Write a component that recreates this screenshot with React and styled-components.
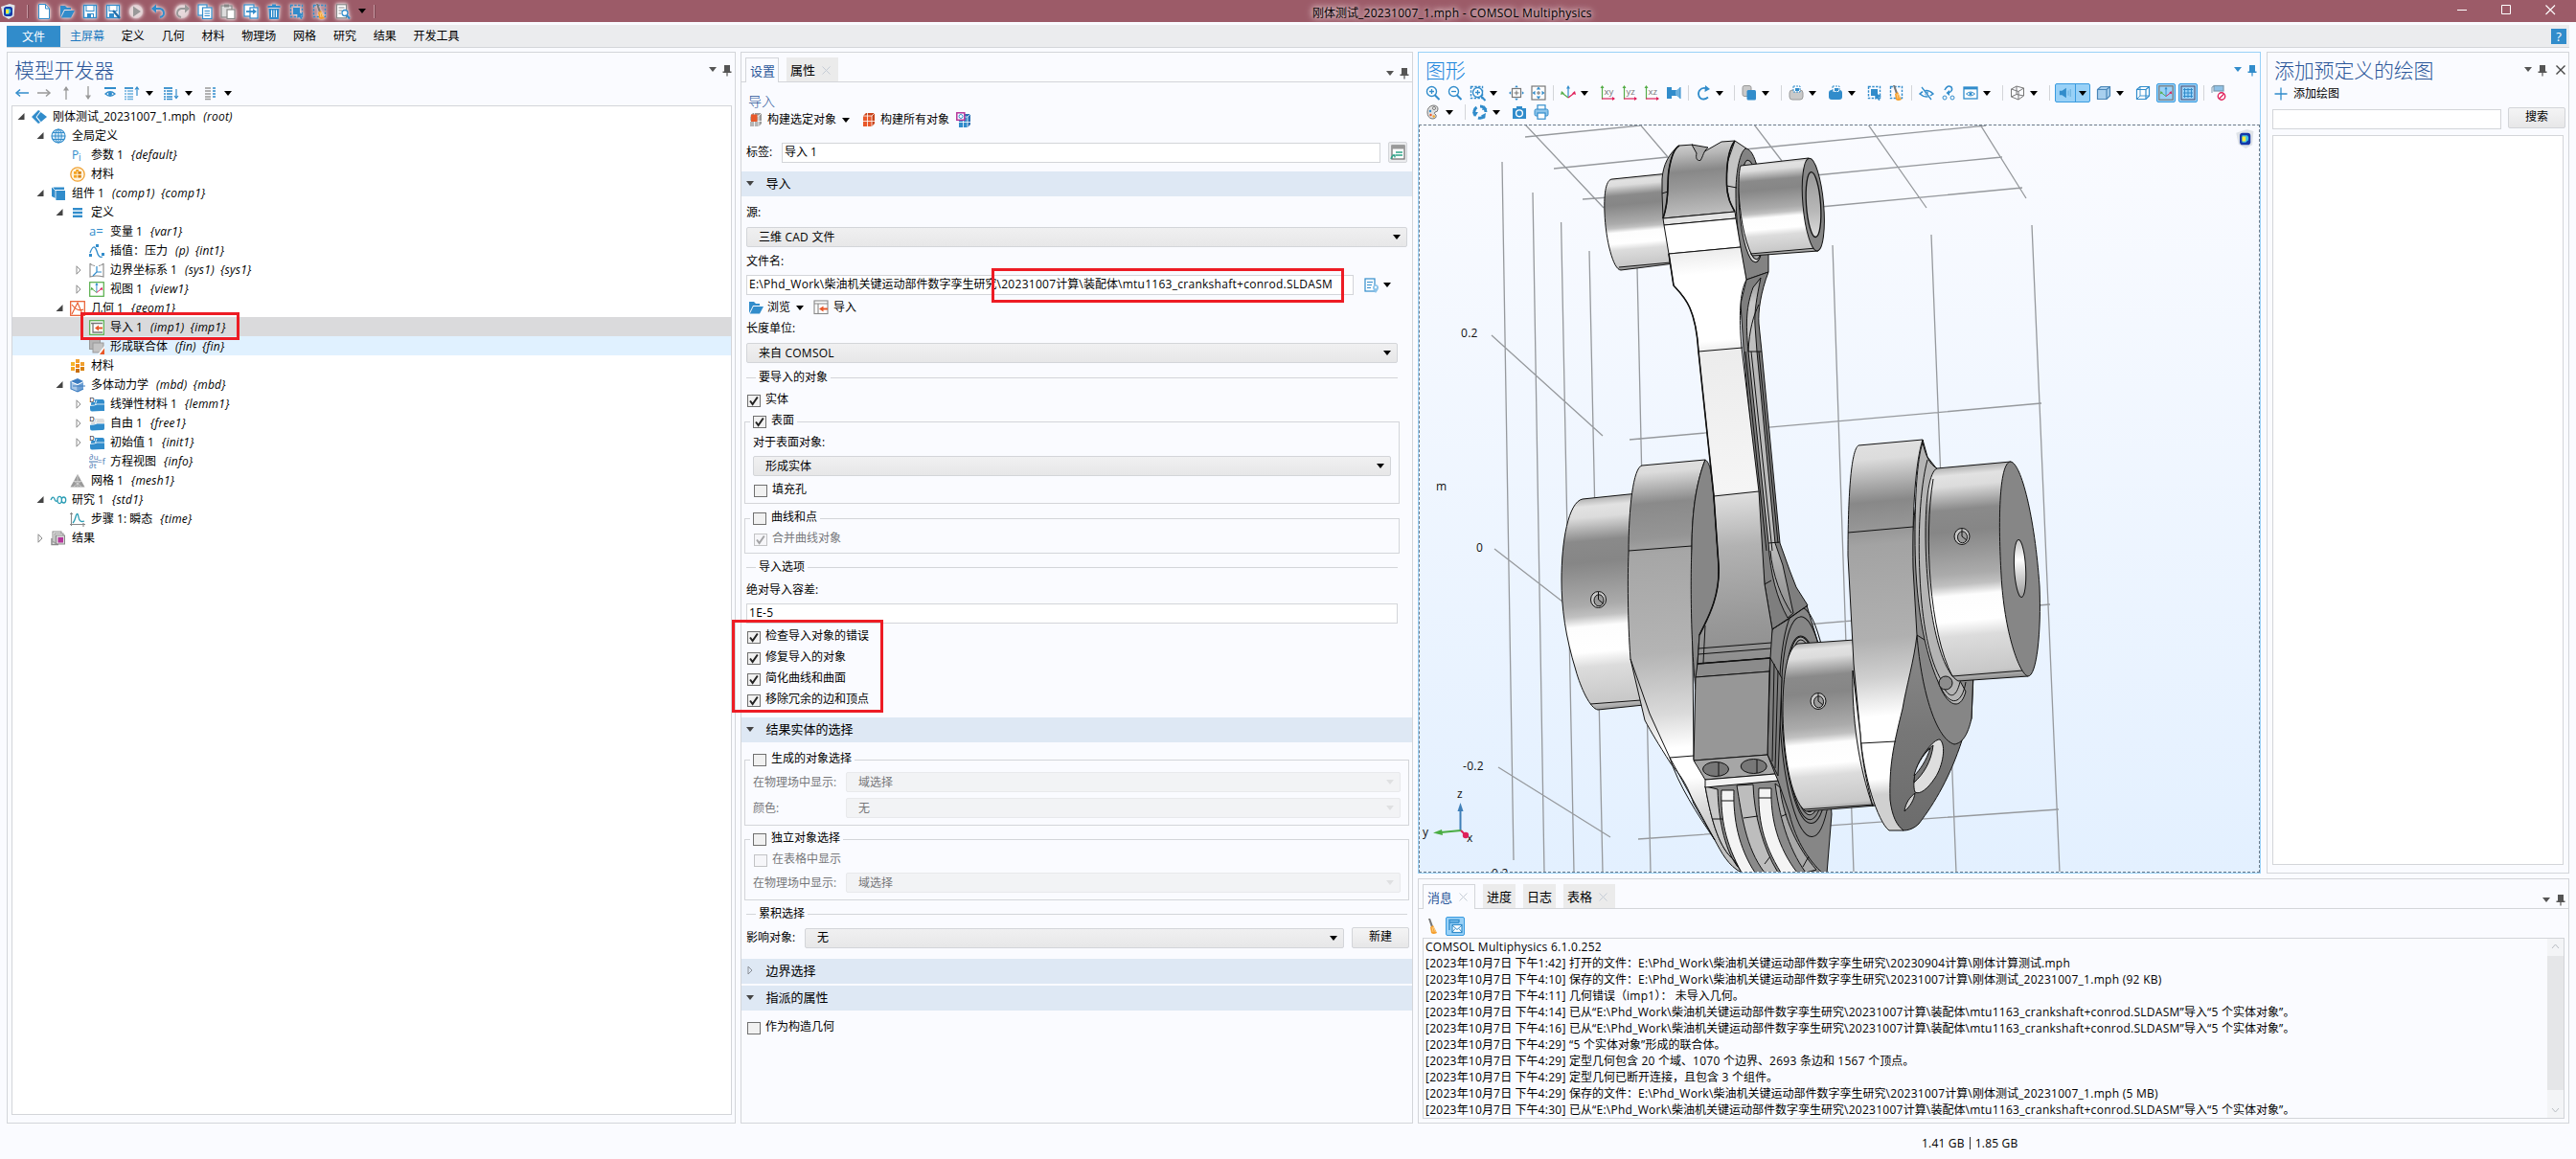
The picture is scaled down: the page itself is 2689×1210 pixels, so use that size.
import React from "react";
import styled, { createGlobalStyle, css } from "styled-components";

const B = "#318ccb";
const O = "#e8582a";
const LINE = "#d3d5d9";

const Global = createGlobalStyle`
  * { box-sizing: border-box; }
  body { margin: 0; background: #fafbff; color: #000; overflow: hidden; }
  body, button { font: 12px/16px "Open Sans", "Noto Sans CJK SC", sans-serif; }
`;

/* ---------- icons, drawn on a 16 x 16 field ---------- */
const s = (d, c = B, w = 1.3) => <path d={d} fill="none" stroke={c} strokeWidth={w} />;
const f = (d, c = B) => <path d={d} fill={c} />;
const r = (x, y, w, h, c = B) => <rect x={x} y={y} width={w} height={h} fill={c} />;
const box = (x, y, w, h, c = B, fill = "none", sw = 1.2) => (
  <rect x={x} y={y} width={w} height={h} fill={fill} stroke={c} strokeWidth={sw} />
);
const t = (x, y, size, c, str) => (
  <text x={x} y={y} fontSize={size} fill={c} fontFamily="Open Sans">{str}</text>
);
const brush = <>{f("M3 0 L5 0 L8 8 L6 9 Z", "#777")}{f("M5 9 L8 7 L12 15 Q8 17 6 15 Z", "#f59f2e")}{s("M7 9 L8 14 M8.4 9 L10.4 14", "#fde0a8", 0.7)}</>;
const brick = (a, b) => <>{f("M2 4 L5 1 H14 V12 L11 15 H2 Z", b)}{r(2, 4, 9, 11, a)}{s("M2 4 H11 V15 M6.5 1 V15 M2 9.5 H14 M11 4 L14 1", "#fff", 0.8)}</>;
const lens = <>{s("M9.8 10.2 L14.5 15", B, 2)}<circle cx="6.5" cy="6.5" r="5" fill="#fff" stroke={B} strokeWidth="1.4" /></>;
const cube = (c, fill = "none") => <><path d="M1.5 4.5 L5 1.5 H14.5 V11 L11 14.5 H1.5 Z" fill={fill} stroke={c} strokeWidth="1.2" />{s("M1.5 4.5 H11 V14.5 M11 4.5 L14.5 1.5", c, 1.2)}</>;
const dom = (a, b) => <>{f("M2 8 Q2 4 7 3 H14 Q16 3 16 6 V15 H2 Z", a)}{f("M1 9 Q6 9 8 8 H16 V13 Q16 15 13 15 L3 15.500 Q1 15.500 1 13 Z", b)}{s("M8 4 Q6 8 7 9 M1 9.500 Q6 9.500 8 8 H16", "#fff", 0.8)}{r(0, 0, 6, 6, "#fff")}{t(0.3, 5.8, 7.5, "#111", "D")}</>;
const dash = <rect x="1.5" y="1.5" width="12" height="12" fill="none" stroke={B} strokeWidth="1.4" strokeDasharray="2.4 1.4" />;
const axis2 = (label) => <>{s("M2.5 1 V14.5", "#54ad47", 1.2)}{s("M2 14 H15", "#e0205a", 1.2)}{f("M.5 3 L2.5 0 L4.5 3 Z", "#54ad47")}{f("M13 12 L16 14 L13 16 Z", "#e0205a")}{t(4.5, 9.5, 9.5, "#777", label)}</>;
const axes3 = <>{s("M8 2 V13", B, 1.2)}{s("M8 13 L1.5 8", "#54ad47", 1.2)}{s("M8 13 L14.5 8", "#e0205a", 1.2)}{f("M6 3.5 L8 0 L10 3.5 Z")}{f("M0 10 L1 6 L4 8.5 Z", "#54ad47")}{f("M16 10 L15 6 L12 8.5 Z", "#e0205a")}</>;
const comsol = <>{f("M1 3 L10 0 L15.5 1.5 L14.500 13 L9 16 L3 12.500 Z", "#dfe3e8")}<rect x="4" y="3" width="9" height="10" rx="2.5" fill="#1438a8" /><path d="M6 5 H10 Q12 6 11 9 L9 11 H6 Z" fill="#3fc3e0" /><path d="M6 6 H9 V10 H6 Z" fill="#f8ea3c" /></>;

const ICONS = {
  comsol,
  file: <>{f("M2.5.5 H9.5 L13.5 5 V15.5 H2.5 Z", "#fff")}{s("M2.5.5 H9.5 L13.5 5 V15.5 H2.5 Z M9.5.5 V5 H13.5", B, 1)}</>,
  open: <>{f("M1 2 H6 L8 4 H12 V6 H5 L1 14 Z")}{f("M5.5 7 H16 L12 14.5 H1.8 Z")}</>,
  save: <>{box(1.5, 1.5, 13, 13, B, "#fff", 1.4)}{box(4, 1.5, 8, 6, B, "#fff", 1)}{r(5, 10, 7, 5)}{r(9, 11, 2, 3, "#fff")}</>,
  saveas: <>{box(1.5, 1.5, 13, 13, B, "#fff", 1.4)}{box(4, 1.5, 8, 6, B, "#fff", 1)}{r(4, 10, 5, 5)}{s("M8 7 L15 15", "#1e6ca8", 2.4)}</>,
  play: <><circle cx="8" cy="8" r="7" fill="#e3d3d6" opacity=".8" />{f("M5 2.5 L13 8 L5 13.5 Z", "#999")}</>,
  undo: <>{s("M3 5 H9 Q13 6 13 10 Q13 13 9 14", B, 1.9)}{f("M0 5 L5 .5 V9.5 Z")}</>,
  redo: <><circle cx="8" cy="8" r="7" fill="#e3d3d6" opacity=".7" />{s("M13 5 H7 Q3 6 3 10 Q3 13 7 14", "#999", 1.9)}{f("M16 5 L11 .5 V9.5 Z", "#999")}</>,
  copy: <>{box(1, 1, 9, 11, B, "#fff")}{box(5.5, 4, 9.5, 11.5, B, "#fff")}{s("M7.5 7.5 H13 M7.5 10 H13 M7.5 12.5 H13", B, 1)}</>,
  paste: <>{box(1, 2, 11, 12, "#888", "#ddd")}{r(4, 0.5, 5, 3, "#888")}{box(7, 6, 8, 9.5, "#888", "#fff")}</>,
  dup: <>{box(1, 1, 10, 12, B, "#fff")}{box(7, 4, 8, 11, B, "#fff")}{s("M3 8 H12", B, 1.8)}{f("M10 5 L14 8 L10 11 Z")}</>,
  trash: <>{r(1.5, 2, 13, 2)}{r(6, 0.5, 4, 2)}{f("M2.5 5 H13.5 L12.8 16 H3.2 Z")}{s("M5.5 6.5 V14 M8 6.5 V14 M10.5 6.5 V14", "#fff", 1)}</>,
  sel: <>{dash}{r(4, 4, 7, 7)}{f("M8 7 L15 12 L12 12.5 L13.5 15.5 L12 16 L10.5 13 L8.5 15 Z")}</>,
  selbrush: <>{dash}<g transform="translate(1 0)">{brush}</g></>,
  find: <>{box(1.5, 0.8, 10, 14, "#888", "#fff")}{s("M3.5 4 H9.5 M3.5 7 H7 M3.5 10 H6", "#888", 1)}<circle cx="10" cy="9.5" r="3" fill="#fff" stroke={B} strokeWidth="1.3" />{s("M12 12 L15 15.5", B, 2)}</>,
  left: <>{s("M2 8 H15", B, 1.5)}{s("M6 4.5 L2 8 L6 11.5", B, 1.5)}</>,
  right: <>{s("M1 8 H14", "#999", 1.5)}{s("M10 4.5 L14 8 L10 11.5", "#999", 1.5)}</>,
  up: <>{s("M8 15 V2", "#999", 1.3)}{f("M5 5.5 L8 1 L11 5.5 Z", "#999")}</>,
  down: <>{s("M8 1 V14", "#999", 1.3)}{f("M5 10.5 L8 15 L11 10.5 Z", "#999")}</>,
  eye: <>{s("M2 3 H14", B, 2)}{s("M3 9 Q8 4.5 13 9 Q8 13.5 3 9 Z", B, 1.3)}<circle cx="8" cy="9" r="2" fill={B} /></>,
  listup: <>{s("M0 3 H9", B, 1.8)}{s("M0 6 H2 M3 6 H9 M0 9 H2 M3 9 H9 M0 12 H2 M3 12 H9 M0 14.5 H2 M3 14.5 H9", "#6cb0dd", 1.3)}{s("M13 11 V2 M11 4.5 L13 2 L15 4.5", B, 1.2)}</>,
  listdown: <>{s("M0 3 H9", B, 1.8)}{s("M0 6 H2 M3 6 H9 M0 9 H2 M3 9 H9 M0 12 H2 M3 12 H9 M0 14.5 H2 M3 14.5 H9", B, 1.5)}{s("M13 4 V14 M11 11 L13 13.5 L15 11", B, 1.2)}</>,
  cols: <>{s("M2 3 H8 M2 6 H8 M2 9 H8 M2 12 H8 M2 14.5 H8", "#999", 1.6)}{s("M10 3 H13 M10 6 H13 M10 9 H13 M10 12 H13", B, 1.6)}</>,
  root: <>{f("M0 8 L7 1 L9 2 L4.5 8 L9 14 L7 15 Z")}{f("M5.5 8 L9.5 3 L16 8 L9.5 13.5 Z")}{s("M5 8 L10 14", "#fff", 0.8)}</>,
  globe: <><circle cx="8" cy="8" r="7" fill="#dceefa" stroke={B} strokeWidth="1.2" /><ellipse cx="8" cy="8" rx="3.2" ry="7" fill="none" stroke={B} />{s("M1 8 H15 M2 4.5 H14 M2 11.5 H14 M8 1 V15", B, 1)}</>,
  pi: <>{t(2, 12, 12, B, "P")}{t(9, 14, 10, B, "i")}</>,
  matg: <><circle cx="8" cy="8" r="7.2" fill="#fff4df" stroke="#f0a030" strokeWidth="1.3" />{r(4, 5, 3.4, 2.8, "#f5a623")}{r(8.4, 5, 3.4, 2.8, "#d9820f")}{r(4, 8.8, 3.4, 2.8, "#f5a623")}{r(8.4, 8.8, 3.4, 2.8, "#d9820f")}{r(6.2, 3, 3, 2, "#f5a623")}</>,
  comp: <>{f("M1 2 L4 1.5 H14 V4 H5 V13 L1 11 Z")}{r(5, 5, 10, 10)}{s("M5 15 V5 L2 2", "#fff", 0.8)}</>,
  defs: <>{r(3, 3, 10, 2.4)}{r(3, 6.8, 10, 2.4)}{r(3, 10.6, 10, 2.4)}</>,
  vars: t(0, 12, 13, B, "a="),
  interp: <>{s("M1 10 Q5 -1 8 8 Q10 16 14 14", B, 1.3)}{r(7, 1, 3, 3)}{r(0, 11, 3, 3)}{r(13, 10, 3, 3)}</>,
  sys: <>{s("M1 1 V15 Q8 13 15 15 V1 M1 1 Q3 3.5 6 3.5 M15 1 Q13 3.5 10 3.5", "#888", 1.1)}{s("M8 4 V10 L4 14 M8 10 L13 10", B, 1.2)}</>,
  view: <>{box(0.7, 0.7, 14.6, 14.6, "#54ad47", "#fff", 1.2)}<g transform="translate(1.5 1) scale(.8)">{axes3}</g></>,
  geom: <>{box(0.7, 0.7, 14.6, 14.6, O, "#fff", 1.2)}{s("M2 14 Q5 8 8 2 L13 14 M2 4 Q8 12 14 9", O, 1.1)}</>,
  imp: <>{box(0.7, 0.7, 14.6, 14.6, "#54ad47", "#fff", 1.2)}{s("M2 3.5 H14 M4 3.5 V13 H14", "#777", 1.3)}{s("M8 8.5 H14", O, 2)}{f("M6 8.5 L10 5.5 V11.5 Z", O)}</>,
  impn: <>{box(1, 1, 14, 13.5, "#888", "#fff", 1.1)}{s("M1 4 H15 M5 4 V14", "#888", 1.1)}{s("M9 9.5 H15", O, 2)}{f("M6 9.5 L10.5 6.5 V12.5 Z", O)}</>,
  fin: <>{box(0.5, 0.5, 11, 10, "#999", "#b5b5b5", 1)}{box(4, 4, 11, 10, "#999", "#c4c4c4", 1)}{f("M9 16 L16 7 V16 Z", "#fff")}{f("M11 16 L16 9.5 V16 Z", O)}</>,
  mat: <>{r(1, 4, 4, 4, "#f5b52c")}{r(6, 1, 4, 4, "#f0a030")}{r(11, 4, 4, 4, "#f0a030")}{r(6, 6, 4, 4, "#f08a1c")}{r(1, 9, 4, 4, "#f5a623")}{r(11, 9, 4, 4, "#d9820f")}{r(6, 11, 4, 4, "#c76d0a")}</>,
  mbd: <>{f("M1 4 L8 1 L14 4 L8 7 Z", "#3d7dc0")}{f("M1 5 L7.5 8 V15 L1 12 Z", "#a9c8e8")}{f("M8.5 8 L14 5 V12 L8.5 15 Z", "#6ea0d4")}{s("M1 4 V12 L8 15 L14 12 M8 8 V15 M3 9 H16", "#3d7dc0", 1.1)}</>,
  domd: dom(B, B),
  free: dom("#dcdcdc", B),
  eq: <>{t(0, 6, 8, "#3f72b0", "∂u")}{t(0, 15, 8, "#3f72b0", "∂t")}{s("M0 8 H9", "#3f72b0", 1)}{t(8.5, 10.5, 9, "#3f72b0", "=f")}</>,
  mesh: <>{f("M8 1 L15.5 14.5 H.5 Z", "#9a9a9a")}{s("M4 8 L12 14 M12 8 L4 14 M4.5 8.5 H11.5 M8 2 V14", "#d6d6d6", 0.8)}</>,
  study: <>{s("M0 8 Q2 3 4 7 Q5 11 7 8 M7 8 A2.200 3 0 1 0 11.300 8 A2.200 3 0 1 0 7 8 M11.300 8 A2.200 3 0 1 0 15.700 8 A2.200 3 0 1 0 11.300 8", "#2b9db5", 1.3)}</>,
  step: <>{s("M1.5 1 V15 M0 13.5 H16 M0 2.5 H3 M14 12 V16", "#888", 1.1)}{s("M3 12 Q5 10 6.5 4 Q8 0 9 6 Q10 12 15 10", "#2b9db5", 1.3)}</>,
  results: <>{box(2, 1, 9, 11, "#888", "#fff", 1)}{box(4, 3, 9, 10, "#888", "#fff", 1)}{box(5.5, 5, 9, 9, "#888", "#ddd", 1)}{r(7.5, 7, 5.5, 5.5, "#b5369b")}{s("M1 8 V14.5 H8", "#888", 1.4)}</>,
  buildsel: <>{brick("#b5b5b5", "#9a9a9a")}{r(3, 2.5, 6.5, 7.5, O)}</>,
  buildall: brick(O, "#c9441b"),
  buildadd: <><g transform="translate(1 1)">{brick(B, "#2a6fb4")}</g>{box(0.8, 0.8, 8, 7.5, "#b5369b", "#fff", 1.5)}<circle cx="5" cy="4.5" r="2" fill="none" stroke={B} /></>,
  label: <>{box(2, 1, 13, 14, "#777", "#fff", 1.3)}{r(2, 1, 13, 3.5, "#999")}{s("M6 8 H13 M6 11 H13", "#2ca387", 1.4)}{s("M1 15 Q2 11 5 11 M2.5 11 H5 V13.5", "#2ca387", 1.4)}</>,
  docpin: <>{box(1, 1, 10, 13, B, "#fff")}{s("M3 4.5 H9 M3 7.5 H8 M3 10.5 H7", B, 1.1)}{f("M12 16 Q8.5 11.5 9 9.5 Q9.7 7 12 7 Q14.6 7 15 9.5 Q15.5 11.5 12 16 Z", "#8cc4ea")}<circle cx="12" cy="10" r="1.2" fill="#fff" /></>,
  zin: <>{lens}{s("M4 6.5 H9 M6.5 4 V9", B, 1.3)}</>,
  zout: <>{lens}{s("M4 6.5 H9", B, 1.3)}</>,
  zbox: <>{dash}<g transform="translate(2 1)">{lens}{s("M4 6.5 H9 M6.5 4 V9", B, 1.3)}</g></>,
  ext: <>{box(3.5, 3.5, 9, 9, "#777", "#fff")}{s("M8 5.5 V10.5 M5.5 8 H10.5", "#777", 1.1)}{f("M8 0 L9.8 2.2 H6.2 Z M8 16 L9.8 13.8 H6.2 Z M0 8 L2.2 6.2 V9.8 Z M16 8 L13.8 6.2 V9.8 Z")}</>,
  ext2: <>{box(1, 1, 14, 14, "#777", "#fff")}{s("M8 6 V10 M6 8 H10", "#777", 1.1)}{f("M8 1.5 L10.3 4.5 H5.7 Z M8 14.5 L10.3 11.5 H5.7 Z M1.5 8 L4.5 5.7 V10.3 Z M14.5 8 L11.5 5.7 V10.3 Z")}</>,
  axes3,
  xy: axis2("xy"), yz: axis2("yz"), xz: axis2("xz"),
  proj: <>{r(1, 2, 5, 12)}{r(6, 5, 5, 6)}{f("M10 6 L15 2 V14 L10 10 Z", "#6cb0dd")}{s("M15 2 V14", B, 1)}</>,
  rot: <>{s("M12 3.5 Q7 1.5 4 5.5 Q1.5 10 5 13.5 Q9 16 13 12.5", B, 1.8)}{f("M10 0 L15 4 L9.5 7 Z")}</>,
  cubes: <><rect x="1" y=".5" width="9" height="11" rx="2" fill="#c9c9c9" stroke="#999" /><rect x="5.500" y="5" width="9.500" height="10.500" rx="1.500" fill={B} /></>,
  selg: <><rect x="1" y="5" width="14" height="10" rx="3" fill="#c9c9c9" stroke="#999" /><rect x="5" y="1" width="7" height="6" fill="#fff" stroke={B} strokeDasharray="2 1" />{r(7, 3, 4, 3)}</>,
  selb: <><rect x="1" y="5" width="14" height="10" rx="3" fill={B} /><rect x="5" y="1" width="7" height="6" fill="#fff" stroke={B} strokeDasharray="2 1" />{r(7, 3, 4, 3)}</>,
  hide: <>{s("M1 9 Q8 2 15 9 Q8 15 1 9 Z", B, 1.5)}<circle cx="8" cy="8.5" r="2" fill={B} />{s("M2 3 L14 14.5", "#fff", 2.4)}{s("M3 2 L13 15", B, 1.3)}</>,
  swap: <>{s("M4 5 Q7 -1 11 2 Q13 6 8 8", B, 1.6)}{f("M9 5 L9 11 L5.5 8 Z")}<circle cx="4" cy="13" r="2" fill="none" stroke={B} /><circle cx="12" cy="13" r="2" fill="none" stroke={B} /></>,
  viewbox: <>{box(1, 2, 14, 12, B, "#fff", 1.3)}{r(1, 2, 14, 2.4)}{s("M3.5 9 Q8 5 12.5 9 Q8 13 3.5 9 Z", B, 1)}<circle cx="8" cy="9" r="1.6" fill={B} /></>,
  wire: <>{s("M1.5 4 L7 1 L14.5 3 V11 L9 15 L1.5 12 Z M1.5 4 L9 6.5 L14.5 3 M9 6.5 V15 M7 1 V9.5 L1.5 12 M7 9.5 L14.5 11", "#777", 1)}</>,
  light: <>{f("M1 5.5 H4 L9 2 V14 L4 10.5 H1 Z")}{s("M11.5 5 V11 M14 3.5 V12.5", "#6cb0dd", 1.2)}</>,
  trans: cube("#4a86b8", "#a8cfee"),
  wbox: <>{cube(B, "#fff")}{s("M1.5 14.5 L5 11 H14.5 M5 11 V1.5", B, 0.9)}</>,
  axbox: <>{box(0.8, 0.8, 14.4, 14.4, "#777", "none", 1.2)}<g transform="translate(1.8 1.4) scale(.78)">{axes3}</g></>,
  grid: <>{box(1, 1, 14, 14, "#557", "none", 1.1)}{s("M3 4.5 H13 M3 8 H13 M3 11.5 H13 M4.5 3 V13 M8 3 V13 M11.5 3 V13", B, 1)}</>,
  nosel: <>{box(3, 0.5, 10, 5.5, "#7c99ad", "#8fc1e6")}{s("M1 8 V2 L4 .5", "#7c99ad", 1)}<circle cx="11" cy="11.5" r="3.7" fill="#fff" stroke="#e0205a" strokeWidth="1.4" />{s("M8.5 14 L13.5 9", "#e0205a", 1.3)}</>,
  palette: <><path d="M8 1 Q13 1 13 5 Q13 8 10 8 Q8 9 11 11 Q12 15 7 15 Q2 14 2 8 Q2 2 8 1 Z" fill="#e0e0e0" stroke="#777" /><circle cx="9" cy="4" r="1.5" fill="#fff" stroke="#777" /><circle cx="5" cy="7" r="1.2" fill={B} /><circle cx="5.5" cy="11" r="1.2" fill={O} /><circle cx="8.7" cy="12.5" r="1.2" fill="#f5a623" /></>,
  aperture: <>{s("M8 2 A6 6 0 0 1 14 8 M12.5 12 A6 6 0 0 1 6 14 M3 11.5 A6 6 0 0 1 4.5 3", B, 3)}{f("M12 1 L15.5 5 L10 6 Z M14 9 L13 15 L9 11.5 Z M0 8 L6 8 L3 13 Z")}</>,
  camera: <>{r(1, 4, 14, 11)}{r(5, 2, 6, 3)}<circle cx="8" cy="9.3" r="3.4" fill={B} stroke="#fff" strokeWidth="1.4" /></>,
  print: <>{box(4, 0.8, 8, 5, B, "#fff")}<rect x="1" y="5" width="14" height="7" rx="1.5" fill="#8cc4ea" stroke={B} />{box(4, 9, 8, 6.2, B, "#fff")}</>,
  brush,
  mail: <>{s("M2 12 V1.5 H12 V4 M2 4 H12", B, 1.3)}{box(5, 6.5, 10, 8, B, "#fff")}{s("M5 7 L10 11.5 L15 7 M5 14 L8 10.5 M15 14 L12 10.5", B, 1)}</>,
  plus: s("M8 1.5 V14.5 M1.5 8 H14.5", B, 1.3),
  cross: s("M3.5 3.5 L12.5 12.5 M12.5 3.5 L3.5 12.5", "#444", 1.4),
  pin: <>{f("M5 3 H11 V9.5 H12.5 V11 H3.5 V9.5 H5 Z", "currentColor")}{f("M7.4 11 H8.6 V14.5 H7.4 Z", "currentColor")}</>,
};
const Svg = styled.svg`display: block; flex: none; overflow: visible;`;
const Icon = ({ name, size = 16 }) => (
  <Svg width={size} height={size} viewBox="0 0 16 16">{ICONS[name]}</Svg>
);

/* ---------- shared controls ---------- */
const Latin = styled.span`letter-spacing: .27px;`;
const Mixed = ({ children }) =>
  [].concat(children).join("").split(/([\x20-\x7e“”]+)/).map((part, i) => (i % 2 ? <Latin key={i}>{part}</Latin> : part));

const Caret = styled.i`
  flex: none;
  width: 0; height: 0;
  border: 4px solid transparent;
  border-top: 5px solid ${(p) => p.$c || "#000"};
  border-bottom: 0;
  opacity: ${(p) => (p.$faint ? 0.08 : 1)};
`;
const Shell = styled.div`
  display: flex;
  flex-direction: column;
  width: 2689px;
  height: 1210px;
  position: relative;
`;
const TitleBar = styled.header`
  display: flex;
  align-items: center;
  height: 23px;
  background: #9c5b68;
  position: relative;
`;
const QuickIcons = styled.div`
  display: flex;
  align-items: center;
  gap: 8px;
  margin-left: 12px;
  & > svg { filter: drop-shadow(0 0 1.5px rgba(255,255,255,.9)) drop-shadow(0 0 2.5px rgba(255,255,255,.6)); }
`;
const Grip = styled.i`
  width: 2px; height: 14px;
  border-left: 1px solid #c99aa4;
  border-right: 1px solid #7d4853;
`;
const Caption = styled.div`
  position: absolute;
  left: 1370px; top: 5px;
  line-height: 17px;
  white-space: nowrap;
  text-shadow: 0 0 5px #e3c9ce, 0 0 7px #e3c9ce, 0 0 10px #e3c9ce;
`;
const WinButtons = styled.div`
  display: flex;
  gap: 35px;
  margin-left: auto;
  padding: 0 21px 3px 0;
`;
const Ribbon = styled.nav`
  display: flex;
  align-items: center;
  height: 24px;
  margin: 3px 7px 4px;
  background: #ebecee;
  border-bottom: 1px solid ${LINE};
`;
const FileTab = styled.div`
  display: grid;
  place-items: center;
  width: 56px; height: 22px;
  padding-top: 3px;
  background: ${B};
  color: #fff;
`;
const RibbonTab = styled.span`
  margin-left: ${(p) => p.$ml || 17.8}px;
  color: ${(p) => (p.$on ? "#2079c0" : "#000")};
`;
const Help = styled.div`
  display: grid;
  place-items: center;
  width: 16px; height: 16px;
  margin: 0 3px 0 auto;
  background: ${B};
  color: #fff;
  font-size: 13px;
`;
const Main = styled.main`
  display: grid;
  grid-template-columns: 761px 702px 1202px;
  gap: 5px;
  height: 1119px;
  margin-left: 7px;
`;
const Panel = styled.section`
  display: flex;
  flex-direction: column;
  min-width: 0; min-height: 0;
  border: 1px solid ${(p) => p.$edge || LINE};
`;
const RightSide = styled.div`
  display: grid;
  grid-template-columns: 880px 316px;
  grid-template-rows: 858px 256px;
  gap: 5px 6px;
  & > :last-child { grid-column: 1 / 3; }
`;
const PanelHead = styled.div`
  display: flex;
  align-items: center;
  flex: none;
  height: 32px;
  padding: 1px 0 0 7px;
  color: ${(p) => p.$c || "#2a5699"};
  font: 300 21px/26px "Noto Sans CJK SC", sans-serif;
  letter-spacing: -.2px;
`;
const Dock = styled.div`
  display: flex;
  align-items: center;
  gap: 3px;
  margin: 2px 0 0 auto;
  color: ${(p) => p.$c || "#555"};
`;
const Docks = ({ c = "#555", close }) => (
  <Dock $c={c}><Caret $c={c} /><Icon name="pin" />{close && <Icon name="cross" />}</Dock>
);
const TreeTools = styled.div`
  display: flex;
  align-items: center;
  height: 20px;
  padding-left: 7px;
  gap: 7px;
  & > i { margin: 0 4px 0 -1px; }
`;

/* ---------- model tree ---------- */
const Tree = styled.div`
  flex: 1;
  margin: 3px 3px 8px 4px;
  border: 1px solid ${LINE};
  background: #fff;
`;
const TreeRow = styled.div`
  display: flex;
  align-items: center;
  height: 20px;
  padding: 1px 0 0 ${(p) => 2 + p.$level * 20}px;
  background: ${(p) => (p.$state === "selected" ? "#dadadc" : p.$state === "hover" ? "#e0f1ff" : "none")};
  white-space: pre;
  em { font-style: italic; margin-left: 8px; letter-spacing: .25px; word-spacing: 3px; }
`;
const Twist = styled.span`
  display: grid;
  place-items: center;
  width: 14px;
  margin-right: 4px;
`;
const TreeLabel = styled.span`margin-left: 6px;`;
const TREE = [
  [0, "v", "root", "刚体测试_20231007_1.mph", "(root)"],
  [1, "v", "globe", "全局定义"],
  [2, "", "pi", "参数 1", "{default}"],
  [2, "", "matg", "材料"],
  [1, "v", "comp", "组件 1", "(comp1) {comp1}"],
  [2, "v", "defs", "定义"],
  [3, "", "vars", "变量 1", "{var1}"],
  [3, "", "interp", "插值：压力", "(p) {int1}"],
  [3, ">", "sys", "边界坐标系 1", "(sys1) {sys1}"],
  [3, ">", "view", "视图 1", "{view1}"],
  [2, "v", "geom", "几何 1", "{geom1}"],
  [3, "", "imp", "导入 1", "(imp1) {imp1}", "selected"],
  [3, "", "fin", "形成联合体", "(fin) {fin}", "hover"],
  [2, "", "mat", "材料"],
  [2, "v", "mbd", "多体动力学", "(mbd) {mbd}"],
  [3, ">", "domd", "线弹性材料 1", "{lemm1}"],
  [3, ">", "free", "自由 1", "{free1}"],
  [3, ">", "domd", "初始值 1", "{init1}"],
  [3, "", "eq", "方程视图", "{info}"],
  [2, "", "mesh", "网格 1", "{mesh1}"],
  [1, "v", "study", "研究 1", "{std1}"],
  [2, "", "step", "步骤 1: 瞬态", "{time}"],
  [1, ">", "results", "结果"],
];

/* ---------- settings form ---------- */
const TabStrip = styled.div`
  display: flex;
  align-items: flex-end;
  height: 31px;
  flex: none;
  padding-left: 4px;
  border-bottom: 1px solid ${LINE};
`;
const Tab = styled.div`
  display: flex;
  align-items: center;
  gap: 7px;
  height: 25px;
  padding: 0 ${(p) => (p.$x ? 7 : 3)}px 0 3px;
  margin-right: 8px;
  font-size: 13px;
  background: #ebebeb;
  border: 1px solid #ebebeb;
  border-bottom: 0;
  ${(p) => p.$on && css`
    height: 26px;
    margin-bottom: -1px;
    padding-left: 4px;
    background: #fafbff;
    border-color: ${LINE};
    color: #2a5699;
  `}
  & > svg { color: #c5ccd6; }
`;
const TabX = () => <Svg width="9" height="9" viewBox="0 0 9 9">{s("M.5 .5 L8.5 8.5 M8.5 .5 L.5 8.5", "currentColor", 1)}</Svg>;
const StripDock = styled.div`margin: 0 0 1px auto;`;
const Row = styled.div`
  display: flex;
  align-items: center;
  flex: none;
  gap: ${(p) => p.$gap || 0}px;
  height: ${(p) => p.$h || 16}px;
  margin: ${(p) => p.$mt || 0}px ${(p) => (p.$mr ?? 5)}px 0 ${(p) => (p.$ml ?? 5)}px;
  color: ${(p) => (p.$off ? "#76777a" : "#000")};
  white-space: nowrap;
`;
const Heading = styled.div`
  margin: 9px 0 0 7px;
  font: 300 14px/20px "Noto Sans CJK SC", sans-serif;
  color: #2a5699;
`;
const SectionBar = styled.div`
  display: flex;
  align-items: center;
  flex: none;
  height: 26px;
  margin-top: ${(p) => p.$mt}px;
  padding: 0 0 2px 5px;
  background: #dee8f4;
  font-size: 13px;
`;
const SectionMark = styled.span`width: 20.5px; display: flex;`;
const Section = ({ mt, shut, children }) => (
  <SectionBar $mt={mt}>
    <SectionMark>{shut ? <Svg width="8" height="10" viewBox="0 0 8 10">{s("M2 1 L6 5 L2 9 Z", "#8a8f96", 1)}</Svg> : <Caret $c="#444" />}</SectionMark>
    {children}
  </SectionBar>
);
const Field = styled.div`
  flex: 1;
  height: 21px;
  padding: 1px 2px;
  border: 1px solid ${LINE};
  background: #fff;
  white-space: nowrap;
`;
const Combo = styled.div`
  display: flex;
  align-items: center;
  justify-content: space-between;
  flex: 1;
  height: 21px;
  padding: 0 6px 0 12px;
  border: 1px solid ${LINE};
  border-radius: 2px;
  background: linear-gradient(#f0f0f1, #e7e7e8);
  ${(p) => p.$off && css`background: #f2f3f5; border-color: #e8e9ec;`}
`;
const Select = ({ off, children }) => <Combo $off={off}><span><Mixed>{children}</Mixed></span><Caret $faint={off} /></Combo>;
const Button = styled.button`
  width: 60px; height: 22px;
  padding: 0 0 2px;
  border: 1px solid ${LINE};
  border-radius: 2px;
  background: linear-gradient(#f4f4f5, #e7e7e8);
  color: #000;
`;
const IconButton = styled.div`
  display: grid;
  place-items: center;
  width: 20px; height: 22px;
  border: 1px solid ${LINE};
  border-radius: 2px;
  background: #ebecee;
`;
const TickBox = styled.span`
  display: grid;
  place-items: center;
  width: 14px; height: 13px;
  background: #f1f1f1;
  border: 1px solid #707070;
  opacity: ${(p) => (p.$off ? 0.4 : 1)};
`;
const Check = ({ on, off, children, ...row }) => (
  <Row $h={14} $gap={5} $off={off} {...row}>
    <TickBox $off={off}>{on && <Svg width="12" height="11" viewBox="0 0 12 11">{s("M2 5.5 L4.6 9 L9.8 1.5", "#222", 2)}</Svg>}</TickBox>
    <TickText>{children}</TickText>
  </Row>
);
const TickText = styled.span`padding-bottom: 2px;`;
const LineTitle = styled(Row)`
  gap: 3px;
  &::before { content: ""; width: 10px; height: 1px; background: ${LINE}; }
  &::after { content: ""; flex: 1; height: 1px; background: ${LINE}; }
`;
const Group = styled.div`
  flex: none;
  margin: ${(p) => p.$mt}px ${(p) => p.$mr}px 0 3px;
  padding: 0 0 ${(p) => p.$pb}px 3px;
  border: 1px solid ${LINE};
`;
const Legend = styled.div`
  width: max-content;
  margin: -8px 0 0 2px;
  padding-right: 3px;
  background: #fafbff;
`;
const Fixed = styled.span`width: ${(p) => p.$w}px;`;
const BtnIcon = styled.span`display: flex; margin-right: ${(p) => p.$mr || 0}px; margin-left: ${(p) => p.$ml || 0}px;`;

/* ---------- graphics ---------- */
const Tools = styled.div`
  display: flex;
  align-items: center;
  gap: 5px;
  flex: none;
  height: 20px;
  padding-left: 6px;
  & > i { margin: 0 6px 0 -1px; }
`;
const Sep = styled.span`width: 1px; height: 16px; background: ${LINE}; margin: 0 0.9px;`;
const Slot = styled.span`display: grid; place-items: center; width: 18px;`;
const Pressed = styled.span`
  display: flex;
  align-items: center;
  justify-content: space-evenly;
  width: ${(p) => p.$w || 20}px;
  height: 20px;
  margin-right: ${(p) => p.$mr || 0}px;
  background: #99d1f7;
  border: 1px solid #3a9be0;
  border-radius: 2px;
`;
const PressedRule = styled.span`width: 1px; height: 18px; background: #3a9be0;`;
const Canvas = styled.div`
  flex: 1;
  min-height: 0;
  margin-top: ${(p) => p.$mt || 0}px;
  border: 1px dashed #6d7a88;
  background: linear-gradient(#fafbff, #e3f0ff);
  & > svg { display: block; }
`;
const T1 = ["zin", "zout", "zbox", "v", "ext", "ext2", "|", "axes3", "v", "xy", "yz", "xz", "proj", "|", "rot", "v", "|", "cubes", "v", "|", "selg", "v", "selb", "v", "sel", "selbrush", "|", "hide", "swap", "viewbox", "v", "|", "wire", "v", "|"];
const T2 = ["trans", "v", "wbox"];
const T3 = ["palette", "v", "|", "aperture", "v", "camera", "print"];
const tool = (n, i) => (n === "v" ? <Caret key={i} /> : n === "|" ? <Sep key={i} /> : <Slot key={i}><Icon name={n} /></Slot>);

/* shading runs across each part, square to the 5 degree tilt of its axis */
const TILT = 0.088;
const grad = (id, x, y1, y2, stops, tilt = TILT) => (
  <linearGradient id={id} gradientUnits="userSpaceOnUse" x1={x} x2={x + (y2 - y1) * tilt} y1={y1} y2={y2}>
    {stops.map(([o, c]) => <stop key={o} offset={o} stopColor={c} />)}
  </linearGradient>
);
const CYL = [[0, "#b0b0b0"], [0.04, "#e2e2e2"], [0.09, "#dcdcdc"], [0.2, "#8a8a8a"], [0.3, "#868686"], [0.5, "#ababab"], [0.55, "#c0c0c0"], [0.6, "#fdfdfd"], [0.72, "#fff"], [0.79, "#dcdcdc"], [0.96, "#c8c8c8"], [1, "#8d8d8d"]];
const GRIDLINES = "M1592 130L1674 217M1712 130L1741 164M1831 130L1860 168M1950 130L2011 217M2067 130L2115 207M1592 143L1712 131M1622 176L1741 164M1652 208L1680 206M1821 156L2073 131M1895 183L2090 164M1900 216L2111 196M1568 169L1580 898M1600 201L1612 911M1629.600 232L1643 911M1659 262L1673 911M1709 280L1723 911M1913 256L1935 911M2016 245L2042 911M2121 235L2150 911M1701 459L2131 421M1740 664L2140 631M1710 876L2149 845M1557 350L1673 455M1560 573L1640 635M1564 801L1681 874";
const Face = ({ d, fill }) => <path d={d} fill={fill} stroke="#111" strokeWidth="1" strokeLinejoin="round" />;
const Edge = ({ d, w = 1 }) => <path d={d} fill="none" stroke="#111" strokeWidth={w} />;
const Bore = ({ x, y }) => (
  <g stroke="#111" fill="#9a9a9a"><ellipse cx={x} cy={y} rx="8" ry="8.500" fill="#c8c8c8" /><ellipse cx={x + 0.5} cy={y + 0.8} rx="5" ry="6" /><path d={`M${x} ${y - 8}V${y}L${x + 5} ${y + 4}`} fill="none" /></g>
);
const Crankshaft = () => (
  <svg width="876" height="779" viewBox="1482 131 876 779">
    <defs>
      {grad("pinL", 1712, 183, 279, CYL)}
      {grad("pinR", 1857, 167, 265, CYL)}
      {grad("mainL", 1690, 517, 739, CYL)}
      {grad("mainR", 2065, 485, 708, CYL)}
      {grad("crankpin", 1910, 669, 845, CYL)}
      {grad("webL", 1735, 480, 880, [[0, "#dedede"], [0.03, "#dcdcdc"], [0.11, "#8a8a8a"], [0.2, "#959595"], [0.24, "#a6a6a6"], [0.5, "#b4b4b4"], [0.66, "#dadada"], [0.75, "#fff"], [0.83, "#fff"], [0.9, "#dedede"], [1, "#c0c0c0"]])}
      {grad("webR", 1965, 462, 867, [[0, "#e0e0e0"], [0.04, "#dcdcdc"], [0.15, "#888"], [0.23, "#999"], [0.26, "#a3a3a3"], [0.5, "#b0b0b0"], [0.6, "#cfcfcf"], [0.7, "#fff"], [0.86, "#fff"], [0.9, "#d0d0d0"], [1, "#d0d0d0"]])}
      {grad("head", 1775, 148, 226, [[0, "#d0d0d0"], [0.15, "#b8b8b8"], [0.38, "#888"], [0.6, "#989898"], [1, "#c2c2c2"]])}
      {grad("shank", 1800, 262, 700, [[0, "#eee"], [0.05, "#fff"], [0.21, "#fff"], [0.235, "#ececec"], [0.57, "#f5f5f5"], [0.58, "#dedede"], [0.7, "#b2b2b2"], [0.88, "#989898"], [1, "#8c8c8c"]])}
      {grad("side", 1840, 280, 640, [[0, "#7c7c7c"], [0.1, "#c8c8c8"], [0.3, "#b8b8b8"], [0.8, "#bdbdbd"], [1, "#8a8a8a"]], 0)}
      {grad("bore", 1893, 180, 248, [[0, "#999"], [0.6, "#b8b8b8"], [1, "#ddd"]], 0)}
      {grad("endhole", 2108, 563, 624, [[0, "#c0c0c0"], [0.35, "#fff"], [0.55, "#ddd"], [1, "#999"]], 0)}
      {grad("webside", 2020, 663, 866, [[0, "#8a8a8a"], [0.5, "#777"], [1, "#6c6c6c"]], 0)}
    </defs>
    <path d={GRIDLINES} stroke="#96999d" strokeWidth="1.300" fill="none" />

    {/* left main journal and web */}
    <Face fill="url(#mainL)" d="M1652 521L1710 515L1716 736L1668 741C1660 740 1650 718 1645 700C1634 664 1630 635 1630 605C1630 566 1637 524 1652 521Z" />
    <Edge d="M1660 735L1713 731" />
    <Bore x={1668.5} y={626} />
    <Face fill="url(#webL)" d="M1714 486L1780 480C1772 500 1766 530 1766 573L1768 793L1800 815L1818 911C1804 904 1797 890 1790 877L1768 839C1760 815 1750 805 1744 797C1730 775 1724 765 1717 752L1702 688C1699 650 1699 600 1700 577C1700 530 1705 488 1714 486Z" />
    <Edge d="M1700 575L1766 570M1743 791L1768 789M1702 688L1722 745L1743 791L1790 877M1743 791C1752 820 1772 850 1790 877" />
    <Face fill="#868686" d="M1780 480C1788 484 1788 510 1794 590L1794 607C1792 630 1778 655 1774 663L1770 720C1764 660 1765 590 1766 573C1766 530 1772 500 1780 480Z" />

    {/* big-end side plate and cap */}
    <Face fill="#868686" d="M1850 657L1886 632L1898 672L1912 850L1907 912H1840L1845 700Z" />
    <g fill="none" stroke="#111" transform="rotate(-3 1880 750)">
      <ellipse cx="1885" cy="754" rx="27" ry="120" />
      <ellipse cx="1885" cy="752" rx="25" ry="108" />
      <ellipse cx="1884" cy="760" rx="22" ry="96" />
      <ellipse cx="1884" cy="758" rx="20" ry="93" fill="#a5a5a5" />
      <ellipse cx="1884" cy="758" rx="17" ry="90" />
    </g>

    {/* connecting rod: far bevel, pins, head */}
    <Face fill="url(#pinL)" d="M1683 187L1742 181L1748 275L1692 282C1684 282 1676 250 1675 222C1674 200 1677 187 1683 187Z" />
    <Edge d="M1690 279L1744 274" />
    <Face fill="#9b9b9b" d="M1753 152C1742 160 1736 172 1735 187L1735 202L1736 228L1745 220V165Z" />
    <Face fill="#c4c4c4" d="M1811 147L1823 155L1833 170L1830 260L1816 260L1802 193L1803 170Z" />
    <Face fill="#838383" d="M1822 155C1815 160 1812 185 1812 200C1812 240 1817 262 1823 292L1846 284V262L1833 170C1830 160 1826 155 1822 155Z" />
    <ellipse cx="1828" cy="222" rx="12" ry="52" transform="rotate(-5 1828 222)" fill="#d8d8d8" stroke="#111" />
    <ellipse cx="1829" cy="219" rx="10" ry="52" transform="rotate(-5 1829 219)" fill="#aaa" stroke="#111" />
    <Face fill="url(#pinR)" d="M1817 173L1888 165L1898 262L1829 267C1820 250 1816 220 1815 200C1815 188 1815 180 1817 173Z" />
    <Edge d="M1827 265L1896 259" />
    <ellipse cx="1892.800" cy="213.600" rx="10.800" ry="48.500" transform="rotate(-5 1893 213.500)" fill="#868686" stroke="#111" />
    <ellipse cx="1893" cy="213.600" rx="7.500" ry="34" transform="rotate(-4 1893 213.500)" fill="url(#bore)" stroke="#111" strokeWidth="1.300" />
    <Face fill="url(#head)" d="M1753 152L1767 151L1776 160L1797 148L1811 147C1804 156 1802 172 1802.500 193C1803 206 1806 212 1811 221L1736 228C1743 208 1740 190 1742 178C1744 166 1747 155 1753 152Z" />
    <Edge w={1.600} d="M1811 147C1804 156 1802 172 1802.500 193C1803 206 1806 212 1811 221M1753 152C1747 155 1744 166 1742 178C1740 190 1743 208 1736 228" />
    <Edge d="M1735 202L1741 200M1802.500 194L1813 196" />
    <Face fill="#a8a8a8" d="M1766 151L1783 154C1778 158 1778 163 1775 167.500C1771 168 1770 165 1771 160Z" />
    <Face fill="#e4e4e4" d="M1736 228L1811 221L1812 228L1737 235Z" />
    <Face fill="#fff" d="M1737 235L1812 228L1817 258L1742 265Z" />

    {/* shank */}
    <Face fill="#7e7e7e" d="M1823 292L1846 284C1838 305 1835 325 1836 338L1839 367L1858 567L1868 595L1875 613L1887 632L1866 647L1850 657L1842 610L1820 363L1817 317Z" />
    <Face fill="url(#side)" d="M1830 300L1838 290C1834 310 1831 325 1832 340L1834 367L1853 567L1861 590L1872 640L1866 645C1855 625 1848 600 1846 567L1825 367C1822 335 1823 320 1830 300Z" />
    <Edge d="M1825 367H1839M1825 367C1826 345 1830 330 1836 318M1846 567L1858 566M1848 575C1850 600 1860 625 1870 640M1850 657L1887 632M1842 610L1849 606M1828 367L1850 575M1836 367L1856 567M1822 367L1844 575" />
    <Face fill="url(#shank)" d="M1742 265L1817 258L1823 292C1816 305 1815 330 1818 363L1836 513L1842 610L1850 657L1848 687L1772 693L1774 663C1780 650 1796 625 1794 590L1789 518L1773 367C1770 320 1758 310 1747 298Z" />
    <Edge w={1.6} d="M1742 265L1747 298C1758 310 1770 320 1773 367L1789 518L1794 590C1796 625 1780 650 1774 663" />
    <Edge d="M1773 367L1819 363M1789 518L1836 513M1773 677L1849 671M1773 683L1848 677M1780 653L1778 692" />
    <Face fill="#8b8b8b" d="M1772 693L1848 687L1847 701L1770 707Z" />
    <Face fill="#7c7c7c" d="M1848 687L1860 708L1856 810L1845 788Z" />
    <Edge d="M1852 693L1850 795M1856 700L1853 802" />
    <Face fill="#979797" d="M1770 707L1847 701L1845 788L1768 794Z" />
    <Edge w={1.6} d="M1772 693L1848 687" />
    <Face fill="#a6a6a6" d="M1768 794L1845 788L1853 808L1780 814Z" />
    <g stroke="#111" fill="#777"><ellipse cx="1791" cy="803" rx="13.500" ry="7.500" /><ellipse cx="1830.700" cy="800" rx="13.500" ry="7.500" /><path d="M1794 796V810M1834 793V807" /></g>

    {/* cap ribs */}
    <Face fill="#8a8a8a" d="M1780 821L1856 815L1868 850C1875 880 1890 900 1902 911H1818L1810 898C1795 885 1787 860 1780 821Z" />
    <Face fill="#c9c9c9" d="M1780 821L1793 824C1794 860 1802 890 1814 905L1810 898C1795 885 1787 860 1780 821Z" />
    <Face fill="#bdbdbd" d="M1813 820L1830 819C1831 850 1840 885 1856 911H1842C1822 885 1818 850 1813 820Z" />
    <Face fill="#a9a9a9" d="M1853 818L1858 822C1862 855 1876 885 1896 908L1885 911C1866 885 1857 850 1853 818Z" />
    <Face fill="#f4f4f4" d="M1797 825H1810C1809 855 1815 885 1832 911H1818C1801 880 1796 855 1797 825Z" />
    <Face fill="#f4f4f4" d="M1836 823H1849C1848 855 1856 885 1876 911H1859C1840 880 1835 855 1836 823Z" />
    <Edge d="M1797 836H1810M1836 833H1849M1788 855H1798M1820 854L1835 852M1860 852L1865 850M1882 905L1888 894M1842 902L1848 894" />
    <Face fill="#f2f2f2" d="M1780 814L1853 808L1856 815L1780 822Z" />

    {/* crank pin */}
    <Face fill="url(#crankpin)" d="M1877 672L1936 668L1958 841L1885 847C1868 835 1861 780 1861 740C1861 705 1866 675 1877 672Z" />
    <Edge d="M1883 845L1956 840" />
    <Bore x={1898} y={732} />

    {/* right web */}
    <Face fill="url(#webside)" d="M2007 459L2012 477L2030 500L2060 705L2058 750L2048 773C2036 810 2020 838 2003 860C1998 865 1992 867 1987 867L1972 860L1970 800L1998 663L1996 560Z" />
    <Face fill="#868686" d="M2001 663L2060 700L2058 750C2054 768 2048 776 2040 777C2022 772 2006 725 2001 663Z" />
    <Face fill="url(#webR)" d="M1940 465L2007 459C2000 480 1996 530 1997 593L2001 663C1998 690 1990 716 1986 740C1976 780 1972 800 1973 835C1975 852 1980 862 1987 867L1972 867C1960 858 1945 810 1942 767L1935 693L1929 580C1929 520 1932 470 1940 465Z" />
    <Face fill="#ececec" d="M1934 700C1933 750 1940 800 1955 842C1948 815 1943 790 1942 767Z" />
    <Edge d="M1929 556L1997 550M1942 776L1979 774" />
    <Face fill="#dedede" d="M2025 772C2032 778 2028 800 2020 812C2012 824 2004 830 1999 827C1995 815 2002 795 2012 782C2017 776 2021 772 2025 772Z" />
    <Face fill="#777" d="M2018 778C2016 795 2008 808 1998 817C1998 800 2008 785 2018 778Z" />
    <Face fill="#e6eef8" d="M2015 781C2011 794 2004 804 1998 810C2000 800 2007 788 2015 781Z" />
    <Face fill="#d0d0d0" d="M1999 828C1998 835 1994 842 1988 847C1989 838 1994 832 1999 828Z" />

    {/* right main journal */}
    <Face fill="#b4b4b4" d="M2007 462C2010 475 2014 485 2022 489L2046 711L2052 722C2046 744 2032 736 2024 714C2004 670 1999 610 1999 560C1999 520 2001 480 2007 462Z" />
    <Edge d="M2012 480C2004 510 2002 560 2004 600C2006 650 2014 690 2027 711M2052 712C2048 736 2036 738 2026 718M2046 712C2042 728 2036 730 2029 718" />
    <circle cx="2031" cy="713" r="7" fill="#8d8d8d" stroke="#111" />
    <Face fill="url(#mainR)" d="M2022 489L2099 482L2117 706L2044 711C2022 698 2010 620 2010 557C2010 520 2014 492 2022 489Z" />
    <Edge d="M2038 706L2112 700M2018 500C2008 560 2014 660 2038 706" />
    <Face fill="#868686" d="M2099 482C2110 484 2124 540 2129 612C2131 660 2126 706 2117 706C2108 704 2092 660 2089 600C2086 550 2086 482 2099 482Z" />
    <ellipse cx="2108.600" cy="593.500" rx="6" ry="30" transform="rotate(-3 2108.600 593.500)" fill="url(#endhole)" stroke="#111" />
    <Bore x={2048} y={560} />

    {/* axis labels and triad */}
    <g fontFamily="Open Sans" fontSize="12" fill="#111" letterSpacing=".3">
      <text x="1525" y="352">0.2</text><text x="1541" y="576">0</text><text x="1499" y="512">m</text>
      <text x="1527" y="804">-0.2</text><text x="1557" y="916">0.2</text>
      <text x="1521" y="833">z</text><text x="1485" y="873">y</text><text x="1531" y="879">x</text>
    </g>
    <path d="M1524.500 867V846" stroke="#3f7fb8" strokeWidth="2" /><path d="M1521.500 847L1524.500 838L1527.500 847Z" fill="#3f7fb8" />
    <path d="M1525 867L1504 869" stroke="#4aad43" strokeWidth="2" /><path d="M1505 866L1496 869.500L1506 872Z" fill="#4aad43" />
    <path d="M1525 867L1530 872" stroke="#e0205a" strokeWidth="2" /><circle cx="1530" cy="872" r="3.200" fill="#e0205a" />
    <svg x="2333" y="135" width="20" height="20" viewBox="0 0 16 16">{comsol}</svg>
  </svg>
);

/* ---------- right panels ---------- */
const SearchRow = styled.div`
  display: flex;
  justify-content: space-between;
  margin: 5px 3px 0 5px;
`;
const SearchField = styled.div`
  width: 239px; height: 21px;
  margin-top: 2px;
  border: 1px solid ${LINE};
  background: #fff;
`;
const AddRow = styled.div`
  display: flex;
  align-items: center;
  gap: 5px;
  height: 20px;
  padding: 1px 0 0 6px;
`;
const PlotList = styled.div`
  flex: 1;
  margin: 6px 5px 8px 5px;
  border: 1px solid ${LINE};
  background: #fff;
`;
const MsgTools = styled.div`
  display: flex;
  align-items: center;
  gap: 5px;
  height: 20px;
  margin: 8px 0 2px 7px;
`;
const MsgBox = styled.div`
  display: flex;
  justify-content: space-between;
  flex: 1;
  margin: 0 4px 5px 4px;
  border: 1px solid ${LINE};
`;
const Lines = styled.div`
  padding: 0 0 0 2px;
  white-space: pre;
  & > div { height: 17px; line-height: 17px; }
`;
const Scroll = styled.div`
  display: flex;
  flex-direction: column;
  justify-content: space-between;
  width: 17px;
  background: #f3f4f6;
  & > svg { margin: 5px auto; }
`;
const Thumb = styled.div`height: 140px; margin-bottom: 12px; background: #e5e6e8;`;
const Status = styled.footer`
  display: flex;
  align-items: center;
  gap: 5px;
  height: 37px;
  padding: 4px 0 0 2006px;
  letter-spacing: .2px;
`;
const StatusRule = styled.span`width: 1px; height: 13px; background: #333;`;
const Mark = styled.div`
  position: absolute;
  left: ${(p) => p.$x}px; top: ${(p) => p.$y}px;
  width: ${(p) => p.$w}px; height: ${(p) => p.$h}px;
  border: 3px solid #ed1c24;
`;
const P = "E:\\Phd_Work\\柴油机关键运动部件数字孪生研究\\";
const IMPORTED = `已从“${P}20231007计算\\装配体\\mtu1163_crankshaft+conrod.SLDASM”导入“5 个实体对象”。`;
const LOG = [
  "COMSOL Multiphysics 6.1.0.252",
  `[2023年10月7日 下午1:42] 打开的文件：${P}20230904计算\\刚体计算测试.mph`,
  `[2023年10月7日 下午4:10] 保存的文件：${P}20231007计算\\刚体测试_20231007_1.mph (92 KB)`,
  "[2023年10月7日 下午4:11] 几何错误（imp1）： 未导入几何。",
  `[2023年10月7日 下午4:14] ${IMPORTED}`,
  `[2023年10月7日 下午4:16] ${IMPORTED}`,
  "[2023年10月7日 下午4:29] “5 个实体对象”形成的联合体。",
  "[2023年10月7日 下午4:29] 定型几何包含 20 个域、1070 个边界、2693 条边和 1567 个顶点。",
  "[2023年10月7日 下午4:29] 定型几何已断开连接，且包含 3 个组件。",
  `[2023年10月7日 下午4:29] 保存的文件：${P}20231007计算\\刚体测试_20231007_1.mph (5 MB)`,
  `[2023年10月7日 下午4:30] ${IMPORTED}`,
];

const Settings = () => (
  <Panel>
    <TabStrip>
      <Tab $on>设置</Tab><Tab $x>属性<TabX /></Tab>
      <StripDock><Docks /></StripDock>
    </TabStrip>
    <Heading>导入</Heading>
    <Row $h={20} $ml={7}>
      <BtnIcon $mr={4}><Icon name="buildsel" /></BtnIcon>构建选定对象
      <BtnIcon $ml={6} $mr={12}><Caret /></BtnIcon>
      <BtnIcon $mr={4}><Icon name="buildall" /></BtnIcon>构建所有对象
      <BtnIcon $ml={7}><Icon name="buildadd" /></BtnIcon>
    </Row>
    <Row $mt={13} $h={22}><Fixed $w={37}>标签:</Fixed><Field>导入 1</Field><BtnIcon $ml={8}><IconButton><Icon name="label" /></IconButton></BtnIcon></Row>
    <Section mt={9}>导入</Section>
    <Row $mt={9}>源:</Row>
    <Row $mt={7} $h={21}><Select>三维 CAD 文件</Select></Row>
    <Row $mt={7}>文件名:</Row>
    <Row $mt={6} $h={21} $mr={22}><Field><Mixed>{P}{"20231007计算\\装配体\\mtu1163_crankshaft+conrod.SLDASM"}</Mixed></Field><BtnIcon $ml={11} $mr={4}><Icon name="docpin" /></BtnIcon><Caret /></Row>
    <Row $mt={3} $h={20} $ml={7}>
      <BtnIcon $mr={4}><Icon name="open" /></BtnIcon>浏览<BtnIcon $ml={6} $mr={10}><Caret /></BtnIcon>
      <BtnIcon $mr={5}><Icon name="impn" /></BtnIcon>导入
    </Row>
    <Row $mt={4}>长度单位:</Row>
    <Row $mt={7} $h={21} $mr={15}><Select>来自 COMSOL</Select></Row>
    <LineTitle $mt={7} $mr={15}>要导入的对象</LineTitle>
    <Check on $mt={9} $ml={6}>实体</Check>
    <Group $mt={15} $mr={13} $pb={6}>
      <Legend><Check on $ml={3} $mr={0}>表面</Check></Legend>
      <Row $mt={7}>对于表面对象:</Row>
      <Row $mt={6} $h={21} $mr={8}><Select>形成实体</Select></Row>
      <Check $mt={8} $ml={6}>填充孔</Check>
    </Group>
    <Group $mt={15} $mr={13} $pb={7}>
      <Legend><Check $ml={3} $mr={0}>曲线和点</Check></Legend>
      <Check on off $mt={8} $ml={6}>合并曲线对象</Check>
    </Group>
    <LineTitle $mt={6} $mr={15}>导入选项</LineTitle>
    <Row $mt={8}>绝对导入容差:</Row>
    <Row $mt={6} $h={21} $mr={15}><Field><Mixed>1E-5</Mixed></Field></Row>
    <Check on $mt={7} $ml={6}>检查导入对象的错误</Check>
    <Check on $mt={8} $ml={6}>修复导入的对象</Check>
    <Check on $mt={8} $ml={6}>简化曲线和曲面</Check>
    <Check on $mt={8} $ml={6}>移除冗余的边和顶点</Check>
    <Section mt={11}>结果实体的选择</Section>
    <Group $mt={18} $mr={3} $pb={7}>
      <Legend><Check $ml={3} $mr={0}>生成的对象选择</Check></Legend>
      <Row $off $mt={6} $h={21} $mr={8}><Fixed $w={97}>在物理场中显示:</Fixed><Select off>域选择</Select></Row>
      <Row $off $mt={6} $h={21} $mr={8}><Fixed $w={97}>颜色:</Fixed><Select off>无</Select></Row>
    </Group>
    <Group $mt={14} $mr={3} $pb={7}>
      <Legend><Check $ml={3} $mr={0}>独立对象选择</Check></Legend>
      <Check off $mt={8} $ml={6}>在表格中显示</Check>
      <Row $off $mt={6} $h={21} $mr={8}><Fixed $w={97}>在物理场中显示:</Fixed><Select off>域选择</Select></Row>
    </Group>
    <LineTitle $mt={6}>累积选择</LineTitle>
    <Row $mt={6} $h={22} $mr={3} $gap={8}><Fixed $w={53}>影响对象:</Fixed><Select>无</Select><Button>新建</Button></Row>
    <Section mt={11} shut>边界选择</Section>
    <Section mt={2}>指派的属性</Section>
    <Check $mt={11} $ml={6}>作为构造几何</Check>
  </Panel>
);

export default function App() {
  return (
    <Shell>
      <Global />
      <TitleBar>
        <Icon name="comsol" />
        <QuickIcons>
          <Grip />
          {["file", "open", "save", "saveas", "play", "undo", "redo", "copy", "paste", "dup", "trash", "sel", "selbrush", "find"].map((n) => <Icon key={n} name={n} />)}
          <Caret /><Grip />
        </QuickIcons>
        <Caption><Mixed>刚体测试_20231007_1.mph - COMSOL Multiphysics</Mixed></Caption>
        <WinButtons>
          <Svg width="11" height="11">{s("M0 5.5 H10", "#fff", 1)}</Svg>
          <Svg width="11" height="11">{s("M.5 .5 H9.500 V9.500 H.5 Z", "#fff", 1)}</Svg>
          <Svg width="11" height="11">{s("M.5 .5 L10 10 M10 .5 L.5 10", "#fff", 1.1)}</Svg>
        </WinButtons>
      </TitleBar>
      <Ribbon>
        <FileTab>文件</FileTab>
        <RibbonTab $on $ml={10}>主屏幕</RibbonTab>
        {["定义", "几何", "材料", "物理场", "网格", "研究", "结果", "开发工具"].map((n) => <RibbonTab key={n}>{n}</RibbonTab>)}
        <Help>?</Help>
      </Ribbon>
      <Main>
        <Panel>
          <PanelHead>模型开发器<Docks /></PanelHead>
          <TreeTools>
            {["left", "right", "up", "down", "eye", "listup", "v", "listdown", "v", "cols", "v"].map((n, i) => (n === "v" ? <Caret key={i} /> : <Icon key={i} name={n} />))}
          </TreeTools>
          <Tree>
            {TREE.map(([level, tw, icon, label, tag, state], i) => (
              <TreeRow key={i} $level={level} $state={state}>
                <Twist>
                  {tw === "v" && <Svg width="8" height="8" viewBox="0 0 8 8">{f("M7.500 0 V7 H.5 Z", "#444")}</Svg>}
                  {tw === ">" && <Svg width="8" height="10" viewBox="0 0 8 10">{s("M2 .8 L6 5 L2 9.200 Z", "#8a8a8a", 1)}</Svg>}
                </Twist>
                <Icon name={icon} />
                <TreeLabel>{label}</TreeLabel>
                {tag && <em>{tag}</em>}
              </TreeRow>
            ))}
          </Tree>
        </Panel>
        <Settings />
        <RightSide>
          <Panel $edge="#99d1f7">
            <PanelHead $c="#1c86dc">图形<Docks c={B} /></PanelHead>
            <Tools>
              {T1.map(tool)}
              <Pressed $w={37}><Icon name="light" size={14} /><PressedRule /><Caret /></Pressed>
              {T2.map(tool)}
              <Pressed $mr={-2}><Icon name="axbox" /></Pressed>
              <Pressed><Icon name="grid" /></Pressed>
              <Sep />
              <Slot><Icon name="nosel" /></Slot>
            </Tools>
            <Tools>{T3.map(tool)}</Tools>
            <Canvas $mt={3}><Crankshaft /></Canvas>
          </Panel>
          <Panel>
            <PanelHead>添加预定义的绘图<Docks close /></PanelHead>
            <AddRow><Icon name="plus" />添加绘图</AddRow>
            <SearchRow><SearchField /><Button>搜索</Button></SearchRow>
            <PlotList />
          </Panel>
          <Panel>
            <TabStrip>
              <Tab $on $x>消息<TabX /></Tab><Tab>进度</Tab><Tab>日志</Tab><Tab $x>表格<TabX /></Tab>
              <StripDock><Docks /></StripDock>
            </TabStrip>
            <MsgTools><Icon name="brush" /><Pressed><Icon name="mail" /></Pressed></MsgTools>
            <MsgBox>
              <Lines>{LOG.map((l, i) => <div key={i}><Mixed>{l}</Mixed></div>)}</Lines>
              <Scroll>
                <Svg width="9" height="6" viewBox="0 0 9 6">{s("M1 5 L4.500 1 L8 5", "#b9bdc3", 1)}</Svg>
                <Thumb />
                <Svg width="9" height="6" viewBox="0 0 9 6">{s("M1 1 L4.500 5 L8 1", "#b9bdc3", 1)}</Svg>
              </Scroll>
            </MsgBox>
          </Panel>
        </RightSide>
      </Main>
      <Status>1.41 GB<StatusRule />1.85 GB</Status>
      <Mark $x={84} $y={326} $w={166} $h={29} />
      <Mark $x={1035} $y={280} $w={368} $h={36} />
      <Mark $x={764} $y={647} $w={158} $h={97} />
    </Shell>
  );
}
